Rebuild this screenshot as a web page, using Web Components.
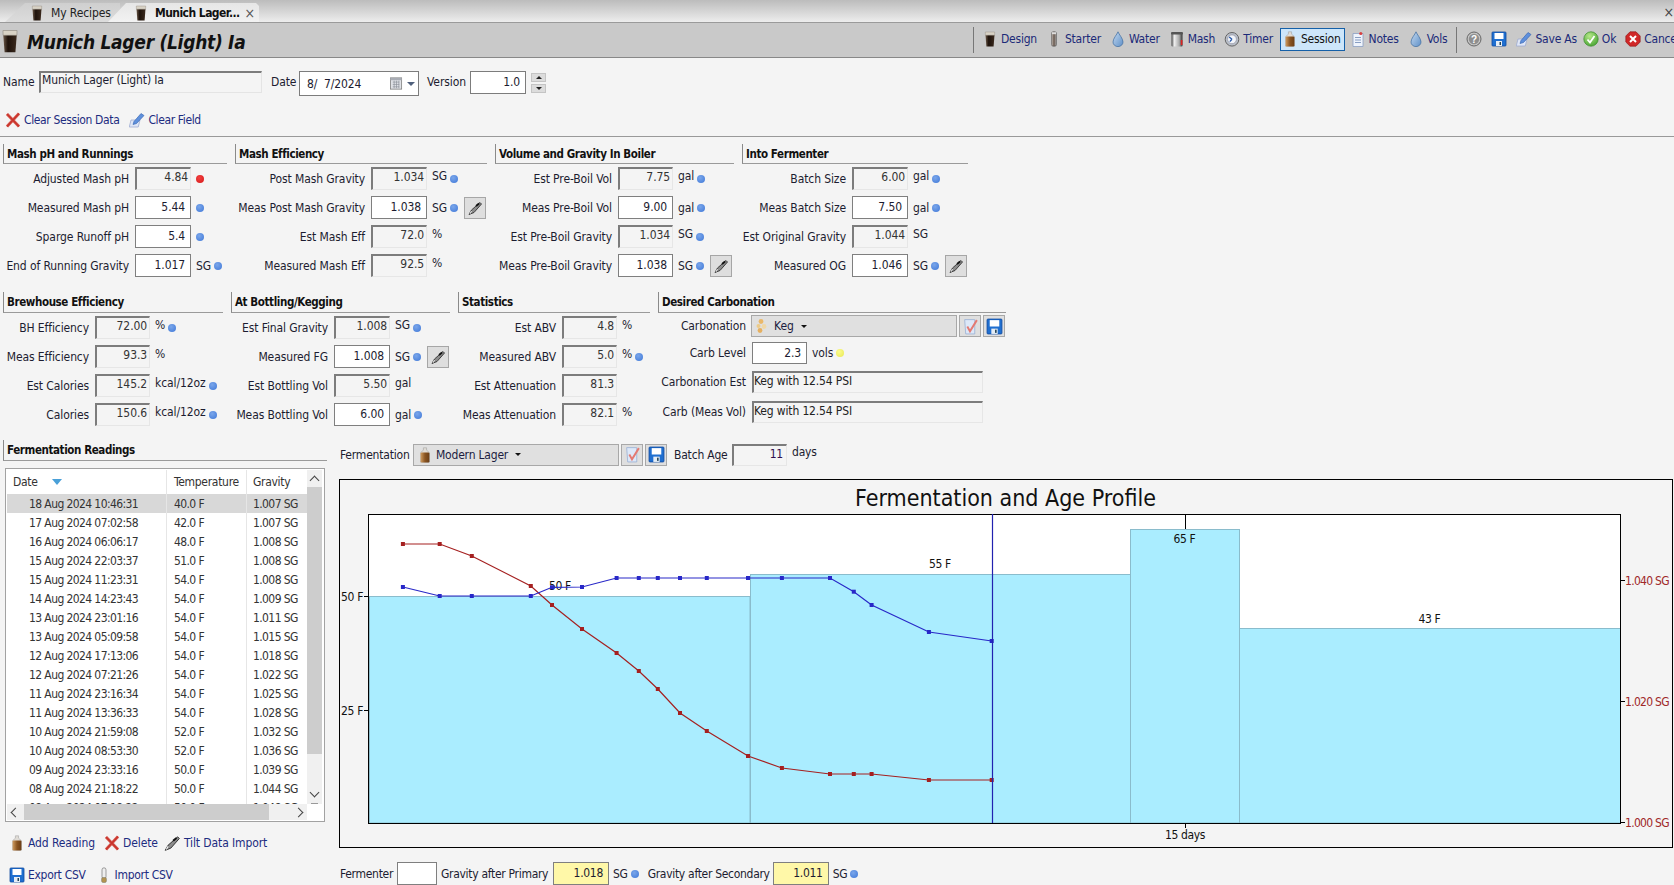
<!DOCTYPE html>
<html><head><meta charset="utf-8"><title>Munich Lager</title>
<style>
html,body{margin:0;padding:0;background:#f4f4f4;width:1674px;height:885px;overflow:hidden}
body{font-family:"DejaVu Sans",sans-serif;font-stretch:condensed;font-size:12px;color:#1c1c30;letter-spacing:-.1px}
.groups{display:flex;gap:8px;padding-left:3px}
#g1{padding-top:7px;border-top:1px solid #999;--hh:20px}
#g2{margin-top:12px}
#bottom{display:flex;margin-top:11px}
#left{width:339px;flex:none;padding-left:3px;box-sizing:border-box}
#right{flex:1;padding-top:3px;min-width:0}
</style></head><body>
<app-tabs></app-tabs>
<app-titlebar></app-titlebar>
<name-row></name-row>
<action-row style="padding:13px 0 5px 5px;letter-spacing:-.37px">
  <act-link icon="redx" w="16">Clear Session Data</act-link>
  <act-link icon="penpaper" w="16" style="margin-left:10px">Clear Field</act-link>
</action-row>
<div class="groups" id="g1">
  <f-section heading="Mash pH and Runnings" style="--w:224px;--lw:126px;--fw:56px">
    <f-row label="Adjusted Mash pH" value="4.84" ro dot="red"></f-row>
    <f-row label="Measured Mash pH" value="5.44" dot="blue"></f-row>
    <f-row label="Sparge Runoff pH" value="5.4" dot="blue"></f-row>
    <f-row label="End of Running Gravity" value="1.017" unit="SG" dot="blue"></f-row>
  </f-section>
  <f-section heading="Mash Efficiency" style="--w:252px;--lw:130px;--fw:56px">
    <f-row label="Post Mash Gravity" value="1.034" ro unit="SG" dot="blue"></f-row>
    <f-row label="Meas Post Mash Gravity" value="1.038" unit="SG" dot="blue" tilt></f-row>
    <f-row label="Est Mash Eff" value="72.0" ro unit="%"></f-row>
    <f-row label="Measured Mash Eff" value="92.5" ro unit="%"></f-row>
  </f-section>
  <f-section heading="Volume and Gravity In Boiler" style="--w:239px;--lw:117px;--fw:55px">
    <f-row label="Est Pre-Boil Vol" value="7.75" ro unit="gal" dot="blue"></f-row>
    <f-row label="Meas Pre-Boil Vol" value="9.00" unit="gal" dot="blue"></f-row>
    <f-row label="Est Pre-Boil Gravity" value="1.034" ro unit="SG" dot="blue"></f-row>
    <f-row label="Meas Pre-Boil Gravity" value="1.038" unit="SG" dot="blue" tilt></f-row>
  </f-section>
  <f-section heading="Into Fermenter" style="--w:226px;--lw:104px;--fw:56px">
    <f-row label="Batch Size" value="6.00" ro unit="gal" dot="blue"></f-row>
    <f-row label="Meas Batch Size" value="7.50" unit="gal" dot="blue"></f-row>
    <f-row label="Est Original Gravity" value="1.044" ro unit="SG"></f-row>
    <f-row label="Measured OG" value="1.046" unit="SG" dot="blue" tilt></f-row>
  </f-section>
</div>
<div class="groups" id="g2">
  <f-section heading="Brewhouse Efficiency" style="--w:220px;--lw:86px;--fw:55px">
    <f-row label="BH Efficiency" value="72.00" ro unit="%" dot="blue"></f-row>
    <f-row label="Meas Efficiency" value="93.3" ro unit="%"></f-row>
    <f-row label="Est Calories" value="145.2" ro unit="kcal/12oz" dot="blue"></f-row>
    <f-row label="Calories" value="150.6" ro unit="kcal/12oz" dot="blue"></f-row>
  </f-section>
  <f-section heading="At Bottling/Kegging" style="--w:219px;--lw:97px;--fw:56px">
    <f-row label="Est Final Gravity" value="1.008" ro unit="SG" dot="blue"></f-row>
    <f-row label="Measured FG" value="1.008" unit="SG" dot="blue" tilt></f-row>
    <f-row label="Est Bottling Vol" value="5.50" ro unit="gal"></f-row>
    <f-row label="Meas Bottling Vol" value="6.00" unit="gal" dot="blue"></f-row>
  </f-section>
  <f-section heading="Statistics" style="--w:192px;--lw:98px;--fw:55px">
    <f-row label="Est ABV" value="4.8" ro unit="%"></f-row>
    <f-row label="Measured ABV" value="5.0" ro unit="%" dot="blue"></f-row>
    <f-row label="Est Attenuation" value="81.3" ro></f-row>
    <f-row label="Meas Attenuation" value="82.1" ro unit="%"></f-row>
  </f-section>
  <f-section heading="Desired Carbonation" style="--w:348px;--lw:88px;--fw:55px">
    <f-row label="Carbonation" style="--rh:26px;--lg:5px">
      <f-combo icon="keg" text="Keg" style="width:206px"></f-combo>
      <square-btn icon="check" style="margin-left:2px"></square-btn>
      <square-btn icon="floppy" style="margin-left:2px"></square-btn>
    </f-row>
    <f-row label="Carb Level" value="2.3" unit="vols" dot="yellow" style="--rh:28px"></f-row>
    <f-row label="Carbonation Est" style="--rh:30px"><f-text style="width:231px">Keg with 12.54 PSI</f-text></f-row>
    <f-row label="Carb (Meas Vol)"><f-text style="width:231px">Keg with 12.54 PSI</f-text></f-row>
  </f-section>
</div>
<div id="bottom">
  <div id="left">
    <f-section heading="Fermentation Readings" style="--w:324px"></f-section>
    <reading-list></reading-list>
    <action-row style="padding:10px 0 0 6px;letter-spacing:-.1px">
      <act-link icon="carboy" w="16">Add Reading</act-link>
      <act-link icon="redx" w="16" style="margin-left:9px">Delete</act-link>
      <act-link icon="tilt" w="18" style="margin-left:5px">Tilt Data Import</act-link>
    </action-row>
    <action-row style="padding:10px 0 0 6px;letter-spacing:-.3px">
      <act-link icon="floppy" w="16">Export CSV</act-link>
      <act-link icon="thermo" w="16" style="margin-left:10px">Import CSV</act-link>
    </action-row>
  </div>
  <div id="right">
    <ferm-bar></ferm-bar>
    <ferm-chart></ferm-chart>
    <ferm-foot></ferm-foot>
  </div>
</div>
<script>
const ICONS={
glass:'<defs><linearGradient id="g" x1="0" x2="1" y1="0" y2="0"><stop offset="0" stop-color="#6b5848"/><stop offset=".35" stop-color="#1e120b"/><stop offset="1" stop-color="#3b2a1e"/></linearGradient></defs><path d="M3.500 4h9l-.9 11.500H4.400z" fill="url(#g)"/><path d="M3.300 1h9.400l-.1 3.200H3.400z" fill="#d9d3c6" stroke="#8d877c" stroke-width=".4"/>',
tube:'<defs><linearGradient id="g" x1="0" x2="1" y1="0" y2="0"><stop offset="0" stop-color="#c7bfb8"/><stop offset=".5" stop-color="#6a5a50"/><stop offset="1" stop-color="#aaa"/></linearGradient></defs><rect x="5.500" y=".8" width="5" height="14.400" rx="1.600" fill="url(#g)" stroke="#444" stroke-width=".5"/><path d="M6 1.200h4v2H6z" fill="#ddd"/>',
drop:'<defs><linearGradient id="g" x1="0" x2="1" y1="0" y2="1"><stop offset="0" stop-color="#c5daf0"/><stop offset="1" stop-color="#5f90c8"/></linearGradient></defs><path d="M8 .8C7 3.500 3 7.500 3 11a5 4.600 0 0 0 10 0C13 7.500 9 3.500 8 .8z" fill="url(#g)" stroke="#3e6c9f" stroke-width=".7"/>',
mash:'<defs><linearGradient id="g" x1="0" x2="1" y1="0" y2="0"><stop offset="0" stop-color="#444"/><stop offset=".25" stop-color="#f0f0f0"/><stop offset=".7" stop-color="#aaa"/><stop offset="1" stop-color="#333"/></linearGradient></defs><rect x="2.500" y="2" width="11" height="13.500" rx="1" fill="url(#g)"/><rect x="2" y="1" width="12" height="2.400" rx="1" fill="#555"/><rect x="11.800" y="9" width="1.600" height="5" fill="#d22"/>',
timer:'<circle cx="8" cy="8.300" r="6.800" fill="#b8bec8" stroke="#666" stroke-width="1"/><circle cx="8" cy="8.300" r="4.400" fill="#f2f5fa" stroke="#889" stroke-width=".6"/><path d="M8 8.300L5.200 6M8 8.300L5.800 10.600" stroke="#2858a8" stroke-width="1.300" fill="none"/>',
carboy:'<defs><linearGradient id="g" x1="0" x2="1" y1="0" y2="0"><stop offset="0" stop-color="#cf9c60"/><stop offset=".5" stop-color="#8a5522"/><stop offset="1" stop-color="#6a3e16"/></linearGradient></defs><path d="M6.400 .8h3.200v2.400l2.800 2.400v9.600H3.600V5.600l2.800-2.400z" fill="#e0dcd6" stroke="#888" stroke-width=".4"/><rect x="3.600" y="5.400" width="8.800" height="10" rx="1.200" fill="url(#g)"/>',
notes:'<path d="M3 2.500h10v13H3z" fill="#eef3fb" stroke="#8aa0c4" stroke-width=".8"/><path d="M5 6.500h6M5 9h6M5 11.500h6" stroke="#7c94bc" stroke-width=".9"/><circle cx="10.800" cy="2.500" r="1.600" fill="#d84040"/>',
help:'<circle cx="8" cy="8" r="7" fill="#c4c4c4" stroke="#666" stroke-width="1"/><circle cx="8" cy="8" r="5.200" fill="#8e8e8e"/><text x="8" y="11.500" font-size="10" font-weight="bold" text-anchor="middle" fill="#fff" font-family="Liberation Sans">?</text>',
floppy:'<rect x="1" y="1" width="14" height="14" rx=".8" fill="#1f6fd0" stroke="#0f4aa0" stroke-width=".8"/><rect x="3.500" y="2" width="9" height="6" fill="#fff"/><rect x="5" y="10" width="6" height="5" fill="#e6edf5"/><rect x="8.500" y="11" width="1.500" height="3" fill="#245"/>',
penpaper:'<path d="M1 8h9v7H1z" fill="#dfe6f6" stroke="#9aa8d0" stroke-width=".7" transform="skewX(-14) translate(3 0)"/><path d="M4 12.500l1-3 7-8 3 2-7.500 8z" fill="#5f90dc" stroke="#2f5fae" stroke-width=".6"/>',
ok:'<defs><radialGradient id="g" cx=".4" cy=".3" r=".8"><stop offset="0" stop-color="#b6e88a"/><stop offset="1" stop-color="#3f9f2c"/></radialGradient></defs><circle cx="8" cy="8" r="7.200" fill="url(#g)" stroke="#3a8a2a" stroke-width=".7"/><path d="M4.500 8.500l2.500 3 4.500-6.500" stroke="#fff" stroke-width="1.800" fill="none"/>',
cancel:'<path d="M5 .8h6L15.200 5v6L11 15.200H5L.8 11V5z" fill="#d02828" stroke="#8a1414" stroke-width=".6"/><path d="M5 5l6 6M11 5l-6 6" stroke="#fff" stroke-width="2"/>',
redx:'<path d="M2 2l12 12.500M14 1.500L2 14.500" stroke="#d85a50" stroke-width="3"/><path d="M2 2l12 12.500M14 1.500L2 14.500" stroke="#c8342c" stroke-width="1.400"/>',
tilt:'<path d="M2 14.500L4.500 10 13 2.500l1.500 1.500-7.500 8.500z" fill="#8d8d8d" stroke="#222" stroke-width=".8"/><path d="M9 6l3-2.500" stroke="#111" stroke-width="1.800"/><path d="M3 13.800l1.500-2.800" stroke="#eee" stroke-width="1"/>',
check:'<path d="M2.500 1.500h9.500v13.500H3.500z" fill="#dde8f8" stroke="#9db2d4" stroke-width=".8"/><path d="M5 8l2.500 4.500L14 2" stroke="#e47a72" stroke-width="1.800" fill="none"/>',
keg:'<circle cx="6" cy="3.500" r="2.400" fill="#eab86a"/><circle cx="3.500" cy="8" r="2" fill="#eccb8a"/><circle cx="9" cy="8.500" r="2.400" fill="#f0d8a8"/><circle cx="5" cy="12.500" r="2.400" fill="#e6b060"/>',
thermo:'<rect x="6" y=".8" width="4" height="11" rx="2" fill="#eee" stroke="#777" stroke-width=".7"/><rect x="5.600" y="10.500" width="4.800" height="5" rx="1.400" fill="#b49450" stroke="#776" stroke-width=".5"/>',
cal:'<rect x="1.500" y="2" width="12" height="12" fill="#dfe1e6" stroke="#777" stroke-width=".8"/><rect x="1.500" y="2" width="12" height="2.500" fill="#a8acb4"/><path d="M4 6.500h7M4 9h7M4 11.500h7M5.500 5v8M8 5v8M10.500 5v8" stroke="#8b8f98" stroke-width=".7"/>'
};
function iconSvg(n,w,h){return `<svg xmlns="http://www.w3.org/2000/svg" viewBox="0 0 16 16" width="${w}" height="${h||w}" style="display:block;flex:none">${ICONS[n]||''}</svg>`}
function def(tag,css,render){customElements.define(tag,class extends HTMLElement{connectedCallback(){if(this.shadowRoot)return;const s=this.attachShadow({mode:'open'});s.innerHTML=`<style>${css}</style>`+render(this)}})}

def('ui-icon',':host{display:inline-flex;flex:none}',e=>iconSvg(e.getAttribute('name'),+e.getAttribute('w')||16,+e.getAttribute('h')||0));

def('app-tabs',`:host{display:block;height:23px;box-sizing:border-box;border-bottom:1px solid #9a9a9a;background:linear-gradient(#bcbcbc,#ededed);position:relative;overflow:hidden}
.bar{display:flex;height:22px;align-items:stretch;white-space:nowrap}
.tab{display:flex;align-items:center;height:19px;margin-top:3px}
.a{margin-left:5px;width:115px;padding-left:24px;box-sizing:border-box;clip-path:polygon(0 100%,20px 0,100% 0,100% 100%);background:linear-gradient(#cfcfcf,#dcdcdc);color:#222}
.b{margin-left:-12px;width:151px;padding-left:25px;box-sizing:border-box;clip-path:polygon(0 100%,18px 0,calc(100% - 3px) 0,100% 3px,100% 100%);background:linear-gradient(#e6e6e6,#f2f2f2);font-weight:bold;color:#111;letter-spacing:-.55px}
.x{margin-left:5px;font-weight:normal;color:#555;font-size:14px}
.close{position:absolute;right:0;top:4px;color:#444;font-size:14px}`,
()=>`<div class="bar"><div class="tab a"><ui-icon name="glass" w="16"></ui-icon><span style="margin-left:6px">My Recipes</span></div>
<div class="tab b"><ui-icon name="glass" w="16"></ui-icon><span style="margin-left:6px">Munich Lager...</span><span class="x">×</span></div></div><span class="close">×</span>`);

def('app-titlebar',`:host{display:flex;height:35px;box-sizing:border-box;border-bottom:1px solid #888;background:#c9c9c9;align-items:center;overflow:hidden;white-space:nowrap}
.title{flex:0 0 973px;display:flex;align-items:center;padding:3px 0 0 1px;box-sizing:border-box;font-size:19px;font-weight:bold;font-style:italic;color:#111;gap:5px;letter-spacing:-.28px}
.title ui-icon{margin:-2px 0 0 -3px}
.sep{width:1px;height:26px;background:#777;flex:none}
.tb{display:flex;gap:3px;align-items:center;margin-left:6px;color:#1b2a78;letter-spacing:-.22px;position:relative;top:-1px}
.sep2{margin:0 4px 0 2px;top:1px;position:relative}
.i{display:flex;align-items:center;gap:3px;height:23px;padding:0 3px 0 1px;box-sizing:border-box;border:1px solid transparent}
.i.on{background:#cde6fa;border-color:#1560a8;color:#111}
.okk{margin-left:-3px}`,
()=>{const it=(ic,t,on,c)=>`<div class="i${on?' on':''} ${c||''}"><ui-icon name="${ic}" w="16"></ui-icon>${t?`<span>${t}</span>`:''}</div>`;
return `<div class="title"><ui-icon name="glass" w="24"></ui-icon><span>Munich Lager (Light) Ia</span></div><div class="sep"></div>
<div class="tb">${it('glass','Design')}${it('tube','Starter')}${it('drop','Water')}${it('mash','Mash')}${it('timer','Timer')}${it('carboy','Session',1)}${it('notes','Notes')}${it('drop','Vols')}<div class="sep sep2"></div>${it('help','')}${it('floppy','')}${it('penpaper','Save As')}${it('ok','Ok',0,'okk')}${it('cancel','Cancel')}</div>`});

def('name-row',`:host{display:flex;align-items:flex-start;padding:13px 0 0 3px;height:25px}
.name{width:36px}.lab{line-height:23px}
.sunk{box-sizing:border-box;height:22px;line-height:15px;background:#f4f4f4;border-style:solid;border-width:2px 1px 1px 2px;border-color:#7c7c7c #e4e4e4 #e4e4e4 #7c7c7c;padding:0 2px 0 1px;overflow:hidden;white-space:nowrap;letter-spacing:-.13px}
.date{box-sizing:border-box;width:120px;height:25px;background:#fff;border:1px solid #7c7c7c;display:flex;align-items:center;padding:0 3px 0 7px;white-space:pre}
.ver{box-sizing:border-box;width:56px;height:23px;background:#fff;border:1px solid #7c7c7c;text-align:right;padding-right:5px;line-height:21px}
.sp{display:flex;flex-direction:column;gap:2px;margin:2px 0 0 5px}
.sp div{width:15px;height:9px;background:#dcdcdc;border:1px solid #c4c4c4;box-sizing:border-box;display:flex;align-items:center;justify-content:center}
.up{width:0;height:0;border:3px solid transparent;border-top:0;border-bottom:3px solid #222}
.dn{width:0;height:0;border:3px solid transparent;border-bottom:0;border-top:3px solid #222}
.car{width:0;height:0;border:4px solid transparent;border-bottom:0;border-top:4px solid #50607c;margin-left:3px}`,
()=>`<span class="lab name">Name</span><div class="sunk" style="width:223px">Munich Lager (Light) Ia</div>
<span class="lab" style="margin-left:9px;width:28px">Date</span><div class="date"><span style="flex:1">8/  7/2024</span><ui-icon name="cal" w="15"></ui-icon><i class="car"></i></div>
<span class="lab" style="margin-left:8px;width:43px">Version</span><div class="ver">1.0</div>
<div class="sp"><div><i class="up"></i></div><div><i class="dn"></i></div></div>`);

def('action-row',`:host{display:flex;align-items:center}`,()=>`<slot></slot>`);
def('act-link',`:host{display:inline-flex;align-items:center;gap:3px;height:22px;color:#1c2c80;white-space:nowrap}`,
e=>`<ui-icon name="${e.getAttribute('icon')}" w="${e.getAttribute('w')||16}"></ui-icon><span><slot></slot></span>`);

def('f-section',`:host{display:block;width:var(--w);flex:none}
h3{margin:0;font-size:11.500px;letter-spacing:-.4px;font-weight:bold;height:var(--hh,21px);line-height:20px;box-sizing:border-box;border-left:1px solid #8a8a8a;border-bottom:1px solid #9a9a9a;padding-left:3px;color:#111;white-space:nowrap}`,
e=>`<h3>${e.getAttribute('heading')}</h3><slot></slot>`);

def('f-row',`:host{display:flex;align-items:center;height:var(--rh,29px);white-space:nowrap}
.l{width:var(--lw);text-align:right;flex:none;margin-right:var(--lg,6px)}
.f{box-sizing:border-box;width:var(--fw);height:22.500px;flex:none;text-align:right}
.e{background:#fff;border:1px solid #7f7f7f;padding-right:5px;line-height:21px}
.r{background:#f4f4f4;border-style:solid;border-width:2px 1px 1px 2px;border-color:#7c7c7c #e6e6e6 #e6e6e6 #7c7c7c;padding-right:2px;line-height:17px;color:#333}
.u{margin-left:5px}.ru{position:relative;top:-3px}
.d{width:8px;height:8px;border-radius:50%;flex:none;margin-left:5px}
.u+.d{margin-left:3px}
.blue{background:radial-gradient(circle at 40% 35%,#7aa6ea,#3f78d8)}
.red{background:radial-gradient(circle at 40% 35%,#f04040,#d81818)}
.yellow{background:radial-gradient(circle at 40% 35%,#fbfb90,#e8e850)}
.t{margin-left:6px;box-sizing:border-box;width:22px;height:22px;background:#dedede;border:1px solid #a6a6a6;display:flex;align-items:center;justify-content:center}`,
e=>{const a=n=>e.getAttribute(n),ro=e.hasAttribute('ro');
let h=`<span class="l">${a('label')}</span>`;
if(a('value')!==null)h+=`<div class="f ${ro?'r':'e'}">${a('value')}</div>`;else h+='<slot></slot>';
if(a('unit'))h+=`<span class="u ${ro?'ru':''}">${a('unit')}</span>`;
if(a('dot'))h+=`<i class="d ${a('dot')}"></i>`;
if(e.hasAttribute('tilt'))h+=`<div class="t"><ui-icon name="tilt" w="16"></ui-icon></div>`;
return h});

def('f-combo',`:host{display:flex;align-items:center;box-sizing:border-box;height:22px;background:#e0e0e0;border:1px solid #a8a8a8;flex:none;padding-left:3px;gap:3px;color:#1c1c40;white-space:nowrap}
.c{width:0;height:0;border:3px solid transparent;border-bottom:0;border-top:3px solid #111;margin-left:4px}`,
e=>`<ui-icon name="${e.getAttribute('icon')}" w="16"></ui-icon><span>${e.getAttribute('text')}</span><i class="c"></i>`);
def('square-btn',`:host{display:flex;align-items:center;justify-content:center;box-sizing:border-box;width:22px;height:22px;background:#dfdfdf;border:1px solid #a8a8a8;flex:none}`,
e=>`<ui-icon name="${e.getAttribute('icon')}" w="17"></ui-icon>`);
def('f-text',`:host{display:block;box-sizing:border-box;height:22px;flex:none;background:#f4f4f4;border-style:solid;border-width:2px 1px 1px 2px;border-color:#7c7c7c #e6e6e6 #e6e6e6 #7c7c7c;padding-left:0;line-height:17px;color:#222;white-space:nowrap;letter-spacing:-.15px}`,()=>`<slot></slot>`);

const READ=[["18 Aug 2024 10:46:31","40.0 F","1.007 SG"],["17 Aug 2024 07:02:58","42.0 F","1.007 SG"],["16 Aug 2024 06:06:17","48.0 F","1.008 SG"],["15 Aug 2024 22:03:37","51.0 F","1.008 SG"],["15 Aug 2024 11:23:31","54.0 F","1.008 SG"],["14 Aug 2024 14:23:43","54.0 F","1.009 SG"],["13 Aug 2024 23:01:16","54.0 F","1.011 SG"],["13 Aug 2024 05:09:58","54.0 F","1.015 SG"],["12 Aug 2024 17:13:06","54.0 F","1.018 SG"],["12 Aug 2024 07:21:26","54.0 F","1.022 SG"],["11 Aug 2024 23:16:34","54.0 F","1.025 SG"],["11 Aug 2024 13:36:33","54.0 F","1.028 SG"],["10 Aug 2024 21:59:08","52.0 F","1.032 SG"],["10 Aug 2024 08:53:30","52.0 F","1.036 SG"],["09 Aug 2024 23:33:16","50.0 F","1.039 SG"],["08 Aug 2024 21:18:22","50.0 F","1.044 SG"],["08 Aug 2024 07:18:22","50.0 F","1.048 SG"]];
def('reading-list',`:host{display:grid;grid-template-columns:300px 15px;grid-template-rows:334px 16px;box-sizing:border-box;width:320px;height:354px;margin:7px 0 0 2px;border:1px solid #a2a2a2;padding:1px;background:#fff;color:#333;overflow:hidden;letter-spacing:-.6px}
.tbl{overflow:hidden;height:334px;position:relative}
.r{display:grid;grid-template-columns:160px 80px 60px;height:19px;line-height:20px;white-space:nowrap}
.r span{padding-left:7px;box-sizing:border-box;border-right:1px solid #e6e6e6;height:19px;overflow:hidden}
.r span:first-child{padding-left:22px}.r span:last-child{border:0;padding-left:6px}
.h{height:24px;line-height:24px;letter-spacing:-.3px}.h span{height:24px}.h span:first-child{padding-left:6px;display:flex;align-items:center}
.s{background:#d8d8d8}
.sort{width:0;height:0;border:5px solid transparent;border-bottom:0;border-top:6px solid #4aa0d8;margin-left:14px}
.v{background:#f0f0f0;display:flex;flex-direction:column;align-items:center}
.th{width:15px;background:#cdcdcd}
.hs{background:#f0f0f0;display:flex;align-items:center;height:16px}
.ar{width:6px;height:6px;border:solid #444;border-width:0 0 1.500px 1.500px;flex:none}`,
()=>{let rows=READ.map((r,i)=>`<div class="r${i==0?' s':''}"><span>${r[0]}</span><span>${r[1]}</span><span>${r[2]}</span></div>`).join('');
return `<div class="tbl"><div class="r h"><span>Date<i class="sort"></i></span><span>Temperature</span><span>Gravity</span></div>${rows}</div>
<div class="v"><div style="height:17px;display:flex;align-items:center"><i class="ar" style="transform:rotate(135deg);margin-top:4px"></i></div><div class="th" style="height:267px"></div><div style="flex:1"></div><div style="height:17px;display:flex;align-items:center;border-bottom:1px solid #999"><i class="ar" style="transform:rotate(-45deg);margin-bottom:4px"></i></div></div>
<div class="hs"><div style="width:17px;display:flex;justify-content:center"><i class="ar" style="transform:rotate(45deg)"></i></div><div style="width:245px;height:16px;background:#cdcdcd"></div><div style="flex:1"></div><div style="width:17px;display:flex;justify-content:center"><i class="ar" style="transform:rotate(225deg)"></i></div></div><div></div>`});

def('ferm-bar',`:host{display:flex;align-items:center;height:23px;white-space:nowrap;padding-left:1px;letter-spacing:-.2px}
.f{box-sizing:border-box;width:55px;height:22px;margin-left:4px;background:#f4f4f4;border-style:solid;border-width:2px 1px 1px 2px;border-color:#7c7c7c #e6e6e6 #e6e6e6 #7c7c7c;text-align:right;padding-right:3px;line-height:17px;color:#301050}
.u{position:relative;top:-3px;margin-left:5px}`,
()=>`<span style="width:73px">Fermentation</span><f-combo icon="carboy" text="Modern Lager" style="width:206px"></f-combo><square-btn icon="check" style="margin-left:2px"></square-btn><square-btn icon="floppy" style="margin-left:2px"></square-btn><span style="margin-left:7px;width:54px">Batch Age</span><div class="f">11</div><span class="u">days</span>`);

const BLUE=[[402.9,587],[439.7,596],[471.8,596],[530.8,596],[552,587.3],[582,587],[616.6,578],[638.8,578],[657.8,578],[680,578],[706.8,578],[748,578],[781.9,578],[830,578],[853.8,591.7],[871.6,605],[928.9,632],[991.7,641]];
const RED=[[402.9,544],[439.7,544],[471.8,556],[530.8,586],[552,605],[582,629],[616.6,653],[638.8,671],[657.8,689],[680,713],[706.8,731],[748,756],[781.9,768],[830,774],[853.8,774],[871.6,774],[928.9,780],[991.7,780]];
def('ferm-chart',`:host{display:block;height:369px;margin-top:13px;font-size:12px}
svg{display:block;overflow:hidden}
text{font-family:"DejaVu Sans",sans-serif;font-stretch:condensed;fill:#111;letter-spacing:-.35px}
.t{letter-spacing:0}
.sg{fill:#a02828;letter-spacing:-.7px}`,
()=>{const series=(p,c)=>`<polyline fill="none" stroke="${c}" stroke-width="1.200" points="${p.map(a=>a.join(',')).join(' ')}"/>`+p.map(a=>`<rect x="${a[0]-2}" y="${a[1]-2}" width="4" height="4" fill="${c}"/>`).join('');
const zone=(x,w,y)=>`<rect x="${x}" y="${y}" width="${w}" height="${823-y}" fill="#aaedff" stroke="#8abccc"/>`;
return `<svg viewBox="339 479 1335 369" width="1335" height="369" xmlns="http://www.w3.org/2000/svg">
<rect x="339.500" y="479.500" width="1333" height="368" fill="#f4f4f4" stroke="#000"/>
<text class="t" x="1005.500" y="506" font-size="23" text-anchor="middle">Fermentation and Age Profile</text>
<rect x="368.500" y="514.500" width="1252" height="309" fill="#fff"/>
${zone(369.500,380.500,596.500)}${zone(750.500,380,574.500)}${zone(1130.500,109,529.500)}${zone(1239.500,381,628.500)}
<rect x="368.500" y="514.500" width="1252" height="309" fill="none" stroke="#000"/>
<path d="M1185.500 514v15M1185.500 823v5M364 596.500h5M364 710.500h5M1621 580.500h4M1621 701.500h4M1621 822.500h4" stroke="#000"/>
<text x="560" y="590" text-anchor="middle">50 F</text><text x="940" y="568" text-anchor="middle">55 F</text><text x="1184.500" y="543" text-anchor="middle">65 F</text><text x="1429.500" y="623" text-anchor="middle">43 F</text>
<text x="363" y="600.500" text-anchor="end">50 F</text><text x="363" y="714.500" text-anchor="end">25 F</text>
<text x="1185" y="839" text-anchor="middle">15 days</text>
<text class="sg" x="1625" y="585">1.040 SG</text><text class="sg" x="1625" y="706">1.020 SG</text><text class="sg" x="1625" y="827">1.000 SG</text>
${series(RED,'#a52020')}${series(BLUE,'#2828c8')}
<path d="M992.500 514v309" stroke="#2222b0" stroke-width="1.200"/>
</svg>`});

def('ferm-foot',`:host{display:flex;align-items:center;height:23px;margin-top:14px;padding-left:1px;white-space:nowrap;letter-spacing:-.3px}
.w{box-sizing:border-box;width:40px;height:23px;background:#fff;border:1px solid #7f7f7f;margin-left:4px}
.y{box-sizing:border-box;width:56px;height:23px;background:#fff8a8;border:1px solid #7f7f7f;text-align:right;padding-right:5px;line-height:21px;margin-left:4px}
.d{width:8px;height:8px;border-radius:50%;background:radial-gradient(circle at 40% 35%,#7aa6ea,#3f78d8);margin-left:3px;flex:none}`,
()=>`<span style="width:53px">Fermenter</span><div class="w"></div><span style="margin-left:4px;width:108px">Gravity after Primary</span><div class="y">1.018</div><span style="margin-left:4px">SG</span><i class="d"></i><span style="margin-left:9px;width:121px">Gravity after Secondary</span><div class="y">1.011</div><span style="margin-left:4px">SG</span><i class="d"></i>`);
</script>
</body></html>
